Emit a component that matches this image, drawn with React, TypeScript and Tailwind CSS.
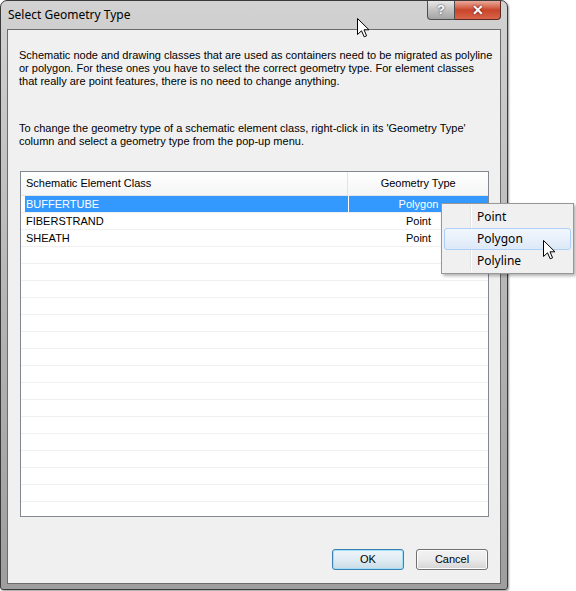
import React from "react";

const Cursor = () => (
  <svg width="13" height="20" viewBox="0 0 13 20">
    <path
      d="M0.5 0.5 V16.5 L4.5 12.8 L7.2 18.8 L9.6 17.8 L7 11.8 H12 Z"
      fill="#fff"
      stroke="#000"
      strokeWidth="1"
      strokeLinejoin="miter"
    />
  </svg>
);

const rows: [string, string][] = [
  ["BUFFERTUBE", "Polygon"],
  ["FIBERSTRAND", "Point"],
  ["SHEATH", "Point"],
];

export default function App() {
  const empty = Array.from({ length: 15 });
  return (
    <div
      className="relative w-[576px] h-[591px] bg-white overflow-hidden"
      style={{ fontFamily: '"Liberation Sans", Arial, sans-serif' }}
    >
      {/* window */}
      <div className="relative flex flex-col w-[508px] h-[590px] rounded-t-[7px] rounded-b-[3px] border border-[#3a3a3a] bg-gradient-to-b from-[#d2d2d2] via-[#b6b6b6] to-[#9e9e9e] shadow-[1px_1px_2px_rgba(0,0,0,0.4)]">
        {/* title bar */}
        <div className="relative flex h-[28px] shrink-0 items-center pl-[7px]">
          <span
            className="text-[12px] text-black"
            style={{ fontFamily: '"Noto Sans", "Open Sans", sans-serif' }}
          >
            Select Geometry Type
          </span>
          <div className="absolute right-[6px] top-0 flex">
            <div className="flex h-[19px] w-[28px] items-center justify-center rounded-bl-[4px] border border-t-0 border-[#4e4e4e] bg-gradient-to-b from-[#e8e8e8] via-[#c2c2c2] to-[#a4a4a4] text-[13px] font-bold text-white [text-shadow:0_0_2px_#222]">
              ?
            </div>
            <div className="flex h-[19px] w-[46px] items-center justify-center rounded-br-[4px] border border-l-0 border-t-0 border-[#5a2a22] bg-gradient-to-b from-[#e9a99b] via-[#c9442a] to-[#d9654a] text-[14px] font-bold text-white [text-shadow:0_0_2px_#400]">
              ✕
            </div>
          </div>
        </div>
        {/* client */}
        <div className="mx-[6px] flex h-[555px] flex-col border border-[#6b6b6b] bg-[#f0f0f0]">
          <div className="pl-[11px] pt-[19px] text-[11px] leading-[13px] text-black whitespace-nowrap">
            <p>
              Schematic node and drawing classes that are used as containers need to be migrated as polyline
              <br />
              or polygon. For these ones you have to select the correct geometry type. For element classes
              <br />
              that really are point features, there is no need to change anything.
            </p>
            <p className="mt-[34px]">
              To change the geometry type of a schematic element class, right-click in its 'Geometry Type'
              <br />
              column and select a geometry type from the pop-up menu.
            </p>
          </div>
          {/* table */}
          <div className="ml-[12px] mr-[11px] mt-[23px] flex h-[346px] flex-col overflow-hidden border border-[#828790] bg-white text-[11px] text-black">
            <div className="flex h-[24px] shrink-0 border-b border-[#e5e5e5] bg-gradient-to-b from-white to-[#f4f5f6]">
              <div className="flex w-[328px] items-center border-r border-[#e3e4e6] pl-[5px]">
                Schematic Element Class
              </div>
              <div className="flex w-[140px] items-center justify-center">Geometry Type</div>
            </div>
            {rows.map(([a, b], i) => (
              <div key={a} className="flex h-[17px] shrink-0 border-b border-[#f0f0f0] pl-[4px]">
                <div
                  className={`flex w-[323px] items-center pl-[1px] ${
                    i === 0 ? "bg-[#3399ff] text-white" : ""
                  }`}
                >
                  {a}
                </div>
                <div
                  className={`flex w-[140px] items-center justify-center border-l border-white ${
                    i === 0 ? "bg-[#3399ff] text-white" : ""
                  }`}
                >
                  {b}
                </div>
              </div>
            ))}
            {empty.map((_, i) => (
              <div key={i} className="h-[17px] shrink-0 border-b border-[#f0f0f0]" />
            ))}
          </div>
          {/* buttons */}
          <div className="mt-[32px] flex justify-end gap-[12px] pr-[12px] text-[11px] text-black">
            <button className="flex h-[21px] w-[72px] items-center justify-center rounded-[3px] border border-[#3c7fb1] bg-gradient-to-b from-[#eef5f9] via-[#e0ecf3] to-[#c8dbe6] shadow-[inset_0_0_0_1px_#9fe0f8]">
              OK
            </button>
            <button className="flex h-[21px] w-[72px] items-center justify-center rounded-[3px] border border-[#707070] bg-gradient-to-b from-[#f2f2f2] via-[#ebebeb] to-[#d4d4d4] shadow-[inset_0_0_0_1px_#fcfcfc]">
              Cancel
            </button>
          </div>
        </div>
      </div>

      {/* context menu */}
      <div
        className="absolute left-[441px] top-[203px] h-[71px] w-[133px] border border-[#979797] bg-[#f0f0f0] shadow-[2px_2px_3px_rgba(0,0,0,0.3)] text-[12px] text-black"
        style={{ fontFamily: '"Noto Sans", "Open Sans", sans-serif' }}
      >
        <div className="absolute left-[28px] top-[2px] bottom-[2px] w-0 border-l border-r border-l-[#e2e3e3] border-r-white" />
        <div className="relative flex flex-col pt-[2px] px-[2px]">
          <div className="flex h-[22px] items-center pl-[33px]">Point</div>
          <div className="flex h-[22px] items-center rounded-[3px] border border-[#aecff7] bg-gradient-to-b from-[#f2f7fe] to-[#dde9f8] pl-[32px]">
            Polygon
          </div>
          <div className="flex h-[22px] items-center pl-[33px]">Polyline</div>
        </div>
      </div>

      {/* cursors */}
      <div className="absolute left-[357px] top-[18px]">
        <Cursor />
      </div>
      <div className="absolute left-[543px] top-[240px]">
        <Cursor />
      </div>
    </div>
  );
}
